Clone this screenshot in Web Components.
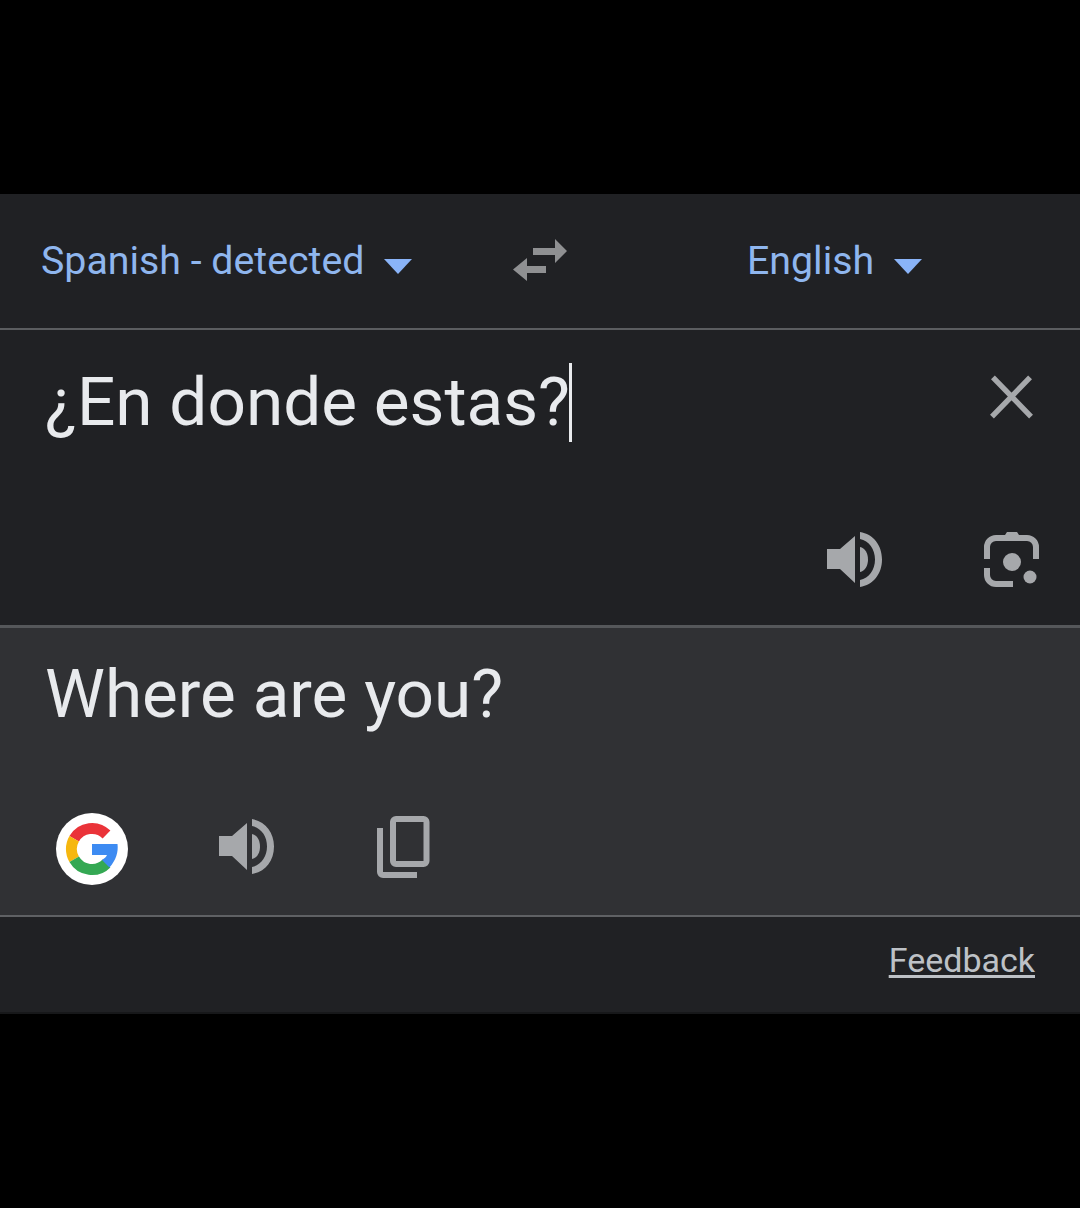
<!DOCTYPE html>
<html><head><meta charset="utf-8"><style>
html,body{margin:0;background:#000;height:100%}
body{font-family:Roboto,"Liberation Sans",sans-serif;overflow:hidden}
</style></head><body>
<template id="t-app"><style>
:host{display:flex;flex-direction:column;width:1080px;height:1208px;background:#000}
.top{height:194px;flex:none}
.card{height:818px;flex:none;background:#202124;display:flex;flex-direction:column;box-shadow:0 2px 0 #17181a}
</style><div class="top"></div><div class="card"><slot></slot></div></template>

<template id="t-langbar"><style>
:host{display:grid;grid-template-columns:472px 234px 1fr;align-items:center;height:134px;flex:none;border-bottom:2px solid #5b5d60;padding-left:41px;color:#8fb6ee;width:1039px}
.l{display:flex;align-items:center;gap:20px;font-size:39.3px}
.c{fill:#8ab4f8;margin-top:12px;display:block}
.sw{display:block;margin-top:-2px}
</style>
<div class="l"><span>Spanish - detected</span><svg class="c" width="28" height="16" viewBox="0 0 28 16"><path d="M0 0h28L14 15z"/></svg></div>
<svg class="sw" width="54" height="42" viewBox="0 0 54 42" fill="#8f9092"><path d="M20 9h22V0l12 12-12 12v-8H20z"/><path d="M33 27H14v-8L0 30.500 14 42v-8h19z"/></svg>
<div class="l"><span>English</span><svg class="c" width="28" height="16" viewBox="0 0 28 16"><path d="M0 0h28L14 15z"/></svg></div>
</template>

<template id="t-source"><style>
:host{display:flex;flex-direction:column;height:295px;flex:none;border-bottom:3px solid #55575a}
.row{display:flex;justify-content:space-between;padding:32px 47px 0 45px;height:118px}
.txt{font-size:67.5px;line-height:80px;color:#e8eaed;display:flex;align-items:flex-start;height:80px}
.caret{display:inline-block;width:3px;height:79px;background:#e8eaed;margin-top:1px;margin-left:-1px}
.x{display:block;margin-top:13px}
.acts{display:flex;justify-content:flex-end;align-items:center;gap:102px;padding:52px 41px 0 0}
svg{display:block}
</style>
<div class="row"><div class="txt"><span>¿En donde estas?</span><i class="caret"></i></div>
<svg class="x" width="43" height="44" viewBox="0 0 44 44"><path d="M3 2l39 40M41 2L2 42" stroke="#a6a8ab" stroke-width="5.500" fill="none"/></svg></div>
<div class="acts">
<svg width="56" height="55" viewBox="0 0 56 55" fill="#a6a8ab"><path d="M1 17h13L29 4v47L14 37H1z"/><path d="M34 15c5 1 8 6 8 12.500s-3 11.500-8 12.500z"/><path d="M34 0c13 2 22 13 22 27.500S47 53 34 55v-7c9-2 15-10 15-20.500S43 9 34 7z"/></svg>
<svg width="55" height="55" viewBox="0 0 55 55" fill="none"><path d="M19 6l4-6h10l4 6z" fill="#a6a8ab"/><path d="M3 27V15a9 9 0 0 1 9-9h31a9 9 0 0 1 9 9v12M3 36v7a9 9 0 0 0 9 9h17" stroke="#a6a8ab" stroke-width="6"/><circle cx="28" cy="30" r="9" fill="#a6a8ab"/><circle cx="46" cy="45" r="6.500" fill="#a6a8ab"/></svg>
</div></template>

<template id="t-result"><style>
:host{display:block;height:287px;flex:none;background:#303134;border-bottom:2px solid #5f6164}
.txt{font-size:67.5px;line-height:80px;color:#e8eaed;padding:26px 0 0 45px;height:80px}
.acts{display:flex;align-items:center;margin-top:79px;padding-left:56px}
svg{display:block}
</style>
<div class="txt">Where are you?</div>
<div class="acts">
<svg width="72" height="72" viewBox="0 0 72 72" fill="none" stroke-width="11"><circle cx="36" cy="36" r="36" fill="#fff" stroke="none"/>
<path d="M50.500 21.500A20.500 20.500 0 0 0 18.200 25.700" stroke="#ea3339"/>
<path d="M18.200 25.700A20.500 20.500 0 0 0 18.200 46.300" stroke="#f6b70f"/>
<path d="M18.200 46.300A20.500 20.500 0 0 0 50.500 50.500" stroke="#34a853"/>
<path d="M36 31H61.500C62.500 39 60 47 53.500 54.500L46 47C48.500 45.500 50 44 51 42H36z" fill="#3d8bf2" stroke="none"/>
</svg>
<svg style="margin-left:90px;margin-top:-6px" width="56" height="55" viewBox="0 0 56 55" fill="#a6a8ab"><path d="M1 17h13L29 4v47L14 37H1z"/><path d="M34 15c5 1 8 6 8 12.500s-3 11.500-8 12.500z"/><path d="M34 0c13 2 22 13 22 27.500S47 53 34 55v-7c9-2 15-10 15-20.500S43 9 34 7z"/></svg>
<svg style="margin-left:103px;margin-top:-4px" width="53" height="62" viewBox="0 0 53 62" fill="none" stroke="#a6a8ab" stroke-width="6"><rect x="16" y="3" width="33.500" height="45" rx="3"/><path d="M3 12v44a3 3 0 0 0 3 3h34"/></svg>
</div></template>

<template id="t-foot"><style>
:host{display:flex;justify-content:flex-end;align-items:flex-start;flex:1;padding:23px 45px 0 0}
a{font-size:34px;line-height:40px;color:#bdc1c6;text-decoration:underline;text-decoration-thickness:3px;text-underline-offset:3px}
</style><a><slot></slot></a></template>

<script>
for (const [n,id] of [['gt-app','t-app'],['gt-langbar','t-langbar'],['gt-source','t-source'],['gt-result','t-result'],['gt-foot','t-foot']]) {
  customElements.define(n, class extends HTMLElement {
    constructor(){super();this.attachShadow({mode:'open'}).appendChild(document.getElementById(id).content.cloneNode(true));}
  });
}
</script>
<gt-app><gt-langbar></gt-langbar><gt-source></gt-source><gt-result></gt-result><gt-foot>Feedback</gt-foot></gt-app>
</body></html>
